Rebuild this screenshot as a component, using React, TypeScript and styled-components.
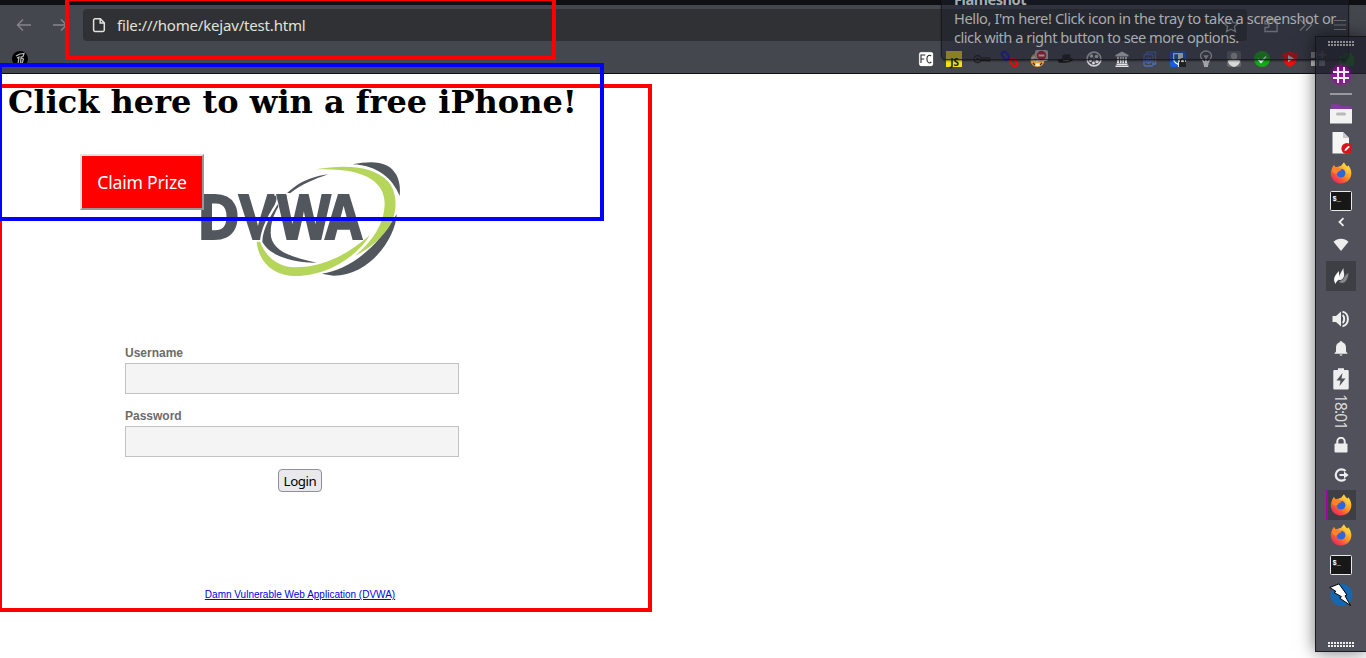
import React from "react";
import styled, { createGlobalStyle } from "styled-components";

const Global = createGlobalStyle`
  * { box-sizing: border-box; }
  body { margin: 0; background: #fff; overflow: hidden; }
  svg { display: block; flex: none; }
`;

const Desktop = styled.div`
  position: relative;
  width: 1366px;
  height: 658px;
  overflow: hidden;
  display: flex;
  flex-direction: column;
  background: #fff;
  font-family: "Noto Sans", sans-serif;
`;

const TabStrip = styled.div`
  height: 5px;
  flex: none;
  background: #0f1014;
`;

const NavBar = styled.div`
  height: 40px;
  flex: none;
  display: flex;
  align-items: center;
  background: #44474e;
  color: #e2e2da;
`;

const NavButtons = styled.div`
  width: 83px;
  display: flex;
  gap: 20px;
  padding-left: 16px;
  color: #85878b;
`;

const UrlBar = styled.div`
  width: 1164px;
  height: 32px;
  display: flex;
  align-items: center;
  padding: 0 8px 0 9px;
  border-radius: 4px;
  background: #303135;
`;

const Url = styled.span`
  flex: 1;
  margin-left: 11px;
  font-size: 15px;
  letter-spacing: -0.18px;
  line-height: 24px;
`;

const NavTools = styled.div`
  display: flex;
  align-items: center;
  gap: 19px;
  padding-left: 16px;
  color: #b5b6b8;
`;

const BookmarkBar = styled.div`
  height: 29px;
  flex: none;
  display: flex;
  align-items: center;
  justify-content: space-between;
  padding: 0 12px;
  background: #44474e;
  border-bottom: 1px solid #0f1014;
`;

const Extensions = styled.div`
  display: flex;
  gap: 12px;
`;

const Page = styled.main`
  position: relative;
  flex: 1;
  display: flex;
  flex-direction: column;
  background: #fff;
`;

const Heading = styled.h1`
  margin: 9px 0 0 8px;
  font: bold 32px/38px "DejaVu Serif", serif;
  color: #000;
`;

const ClaimButton = styled.button`
  position: absolute;
  left: 80px;
  top: 80px;
  width: 124px;
  height: 56px;
  padding: 0;
  border: 2px solid;
  border-color: #e3e3e3 #979797 #979797 #e3e3e3;
  background: #f00;
  color: #fff;
  font: 17.6px "Noto Sans", sans-serif;
  letter-spacing: -0.2px;
`;

const LoginFrame = styled.section`
  width: 600px;
  display: flex;
  flex-direction: column;
  align-items: center;
  padding-top: 39px;
  font-family: "Liberation Sans", Arial, sans-serif;
`;

const Brand = styled.div`
  width: 220px;
  height: 120px;
`;

const Form = styled.form`
  width: 350px;
  display: flex;
  flex-direction: column;
  margin-top: 64px;
`;

const Field = styled.label`
  display: flex;
  flex-direction: column;
  height: 63px;
  font-size: 12px;
  font-weight: bold;
  line-height: 18px;
  color: #6b6b6b;
`;

const Input = styled.input`
  width: 334px;
  height: 31px;
  margin-top: 1px;
  border: 1px solid #c2c2c2;
  background: #f4f4f4;
`;

const LoginButton = styled.button`
  align-self: center;
  width: 44px;
  height: 23px;
  margin-top: -1px;
  padding: 0;
  border: 1px solid #8f8f9d;
  border-radius: 4px;
  background: #e9e9ed;
  color: #000;
  font: 13.3px/20px "Noto Sans", sans-serif;
  letter-spacing: -0.4px;
`;

const FooterLink = styled.a`
  margin-top: 96px;
  font-size: 10px;
  line-height: 13px;
  color: #0000ee;
  text-decoration: underline;
`;

const Outline = styled.div<{ $c: string; $x: number; $y: number; $w: number; $h: number }>`
  position: absolute;
  left: ${(p) => p.$x}px;
  top: ${(p) => p.$y}px;
  width: ${(p) => p.$w}px;
  height: ${(p) => p.$h}px;
  border: 4px solid ${(p) => p.$c};
  pointer-events: none;
`;

const Notification = styled.aside`
  position: absolute;
  left: 941px;
  top: -14px;
  width: 408px;
  height: 74px;
  padding: 3px 12px;
  border: 1px solid rgba(20, 21, 26, 0.75);
  border-radius: 5px;
  background: rgba(28, 31, 44, 0.5);
  box-shadow: 0 1px 2px rgba(0, 0, 0, 0.5);
  color: #a9abad;
  font-size: 14.67px;
  line-height: 19px;
  white-space: nowrap;
`;

const NoticeLine = styled.div<{ $track: number; $bold?: boolean }>`
  letter-spacing: ${(p) => p.$track}px;
  font-weight: ${(p) => (p.$bold ? 700 : 400)};
`;

const Dock = styled.nav`
  position: absolute;
  left: 1315px;
  top: 36px;
  width: 51px;
  height: 616px;
  display: flex;
  flex-direction: column;
  border: 1px solid rgba(18, 19, 24, 0.85);
  border-right: 0;
  background: rgba(31, 32, 43, 0.78);
  box-shadow: 0 0 16px rgba(0, 0, 0, 0.55);
  clip-path: inset(-40px 0 -40px -40px);
`;

const Slot = styled.div<{ $h?: number; $gap?: number }>`
  height: ${(p) => p.$h ?? 30}px;
  margin-top: ${(p) => p.$gap ?? 0}px;
  flex: none;
  display: flex;
  align-items: center;
  justify-content: center;
`;

const ActiveTile = styled.div<{ $marked?: boolean }>`
  width: 30px;
  height: 30px;
  display: flex;
  align-items: center;
  justify-content: center;
  background: #3e3f45;
  box-shadow: ${(p) => (p.$marked ? "inset 2px 0 #a800a8" : "none")};
`;

const Clock = styled.span`
  writing-mode: vertical-rl;
  color: #dcdcdc;
  font-size: 15.5px;
  letter-spacing: -0.9px;
  line-height: 18px;
`;

const Divider = styled.div`
  width: 22px;
  height: 2px;
  background: #9a9a9e;
`;

const Grip = ({ color }: { color: string }) => (
  <svg width="27" height="5" fill={color}>
    {Array.from({ length: 9 }, (_, i) => (
      <g key={i}>
        <rect x={i * 3} y="0" width="2" height="2" />
        <rect x={i * 3} y="3" width="2" height="2" />
      </g>
    ))}
  </svg>
);

const Arrow = ({ flip }: { flip?: boolean }) => (
  <svg width="16" height="16" viewBox="0 0 16 16" fill="none" stroke="currentColor" strokeWidth="1.4">
    <path d={flip ? "M1 8h13M9 2.5 14.5 8 9 13.5" : "M15 8H2M7 2.5 1.5 8 7 13.5"} />
  </svg>
);

const FileIcon = () => (
  <svg width="14" height="16" viewBox="0 0 14 16" fill="none" stroke="#e2e2da" strokeWidth="1.5">
    <path d="M3 1.8h5.3l4 4V13a1.4 1.4 0 0 1-1.4 1.4H3A1.4 1.4 0 0 1 1.6 13V3.2A1.4 1.4 0 0 1 3 1.8ZM8.2 2v4h4" />
  </svg>
);

const StarIcon = () => (
  <svg width="16" height="16" viewBox="0 0 16 16" fill="none" stroke="#b5b6b8" strokeWidth="1.3">
    <path d="m8 1 2.1 4.6 5 .6-3.7 3.4 1 5L8 12.2l-4.4 2.4 1-5L.9 6.2l5-.6Z" />
  </svg>
);

const PuzzleIcon = () => (
  <svg width="16" height="16" viewBox="0 0 16 16" fill="none" stroke="currentColor" strokeWidth="1.4">
    <path d="M2 14.5v-4h2.2a1.8 1.8 0 0 0 0-3.6H2V4h4.5V2.8a1.8 1.8 0 0 1 3.6 0V4h4v10.5Z" />
  </svg>
);

const ChevronsIcon = () => (
  <svg width="16" height="16" viewBox="0 0 16 16" fill="none" stroke="currentColor" strokeWidth="1.4">
    <path d="m2 2.5 5.5 5.5L2 13.5M8 2.5 13.5 8 8 13.5" />
  </svg>
);

const MenuIcon = () => (
  <svg width="14" height="12" viewBox="0 0 14 12" stroke="currentColor" strokeWidth="1.2">
    <path d="M1 1.5h12M1 6h12M1 10.5h12" />
  </svg>
);

const Favicon = () => (
  <svg width="16" height="16" viewBox="0 0 16 16">
    <circle cx="8" cy="8" r="8" fill="#000" />
    <path d="m4 5 4-2 4-.5-1 3-2 .5-.5 7M5 7l2-1-1 7M9.5 7l2 1-1.5 4" fill="none" stroke="#b9b9b9" strokeWidth="1.2" />
  </svg>
);

const extensionArt: React.ReactNode[] = [
  <g>
    <rect x=".7" y=".7" width="14.8" height="14.8" rx="2.4" fill="#fff" stroke="#292929" strokeWidth=".6" />
    <path d="M3 12V4h4.3M3 8h3.2M13.2 5c-1.5-1.6-4.3-.6-4.3 3s2.4 5 4.4 3" fill="none" stroke="#292929" strokeWidth="1.1" />
  </g>,
  <g>
    <rect width="16" height="16" fill="#f7df1e" />
    <text x="4.3" y="14.6" fontFamily="Open Sans" fontSize="10" fontWeight="700" fill="#222">JS</text>
  </g>,
  <g fill="none" stroke="#202126" strokeWidth="1.3">
    <circle cx="3.6" cy="8" r="3.5" />
    <circle cx="3.6" cy="8" r=".8" />
    <path d="M7 6.8h8.5v3h-2l-1-1.2-1 1.2-1-1.2-1 1H7" />
  </g>,
  <g fill="none" strokeWidth="2">
    <rect x="-1" y="2.3" width="8.5" height="5" rx="2.5" transform="rotate(52 3.5 4.8)" stroke="#1b1bbb" />
    <rect x="7.5" y="8.5" width="8.5" height="5" rx="2.5" transform="rotate(52 11.5 11)" stroke="#f00" />
  </g>,
  <g>
    <circle cx="7.5" cy="9" r="7" fill="#e9a33a" />
    <path d="M1 7c3-3 7-3 12 0l-4 3c-3 1-6 0-8-3M4 13c3-1 5-1 8 0l-3 2H6Z" fill="#f2e9df" />
    <path d="m4 8 2.5 1.5M10 9.5l2.5-.5M3 12l2 2M12 12l-2 2" stroke="#40291a" strokeWidth="1.3" />
    <rect x="5" y="-1" width="13" height="11" rx="2" fill="#c5c6cb" />
    <circle cx="11.5" cy="4.5" r="4.7" fill="#d51d35" />
    <path d="M8.6 4.5h5.8" stroke="#fff" strokeWidth="2" />
  </g>,
  <g fill="#1c1d20">
    <ellipse cx="7.5" cy="9.3" rx="7.7" ry="2.6" transform="rotate(-8 7.5 9.3)" />
    <path d="M4 4.5c2-1 6-1.5 8.5-.8L12 9c-2 1.5-6 1.5-7 0Z" />
    <path d="M5 9c2 1 5 1 7-.5" fill="none" stroke="#777" strokeWidth=".8" />
  </g>,
  <g>
    <circle cx="8" cy="8" r="6.9" fill="none" stroke="#cfd0d3" strokeWidth="1.6" />
    <g fill="#e0e1e3">
      <circle cx="5.5" cy="5" r="1.8" /><circle cx="10.5" cy="5.5" r="1.8" /><circle cx="4.5" cy="9.5" r="1.5" />
      <circle cx="11" cy="10.5" r="1.7" /><circle cx="7.5" cy="12" r="1.4" /><circle cx="8" cy="8.5" r="1" />
    </g>
  </g>,
  <g fill="#e4e5e7">
    <path d="M8 .5 14.5 4v1.5h-13V4ZM2.500 12.500h11V14h-11ZM1.500 14.500h13V16h-13Z" />
    <path d="M3 6h2v6H3ZM5.900 6h1.700v6H5.900ZM8.400 6h1.700v6H8.400ZM11 6h2v6h-2Z" />
  </g>,
  <g fill="none" stroke="#4c70b8" strokeWidth="1.3">
    <rect x="2" y="3.5" width="9" height="11.5" rx="1.5" />
    <path d="M4.5 3V1.2h9V13H11" />
    <circle cx="6.5" cy="9.5" r="2.6" /><circle cx="6.5" cy="9.5" r=".7" />
  </g>,
  <g>
    <rect width="16" height="16" rx="2" fill="#175ddc" />
    <path d="M3 2h10v6c0 3-3 5-5 6-2-1-5-3-5-6Z" fill="#fff" />
    <path d="M4.3 3.2H8v9.4C6 11.5 4.3 10 4.3 8Z" fill="#175ddc" />
    <path d="M8 8h8v8H8Z" fill="#e8e8e8" />
    <rect x="9" y="11" width="7" height="5" fill="#222" />
    <path d="M10.5 11V9.7a2 2 0 0 1 4 0V11" fill="none" stroke="#222" strokeWidth="1.3" />
  </g>,
  <g fill="none" stroke="#c4c5c8" strokeWidth="1.4">
    <path d="M5.5 11C5.5 9 2.5 8 2.5 5a5.5 5 0 0 1 11 0c0 3-3 4-3 6Z" />
    <path d="M8 11V7l-1.500-2h3L8 7M5.500 13h5M6 15h4" />
  </g>,
  <g>
    <rect x="1" width="14" height="16" rx="2" fill="#66686e" />
    <circle cx="8" cy="5" r="3.2" fill="#b2b3b5" />
    <path d="M2 11c0-3 3-3 6-3s6 0 6 3c-1 3-4 4.500-6 5-2-.5-5-2-6-5Z" fill="#d8d8d8" />
  </g>,
  <g>
    <circle cx="8" cy="8" r="8" fill="#17a81a" />
    <path d="m4 8.2 3 3L12 5.5" fill="none" stroke="#fff" strokeWidth="1.7" />
  </g>,
  <g>
    <path d="M8 0c2 1.500 5 2 7.500 2C16 9 13 14 8 16 3 14 0 9 .5 2 3 2 6 1.500 8 0Z" fill="#f20d0d" />
    <path d="m6 4 6 3.500L6 11Z" fill="#ddd" />
  </g>,
  <path d="M1 1h6v6H1ZM1 9h6v6H1ZM9 9h6v6H9ZM11.300 0v2.800H8.500v1.800h2.800v2.800h1.800V4.600h2.900V2.800h-2.900V0Z" fill="#c6c6c6" />,
  <g fill="#18a51a">
    <path d="M1 5h4V2h8l3 4v9H1Z" />
    <path d="M4 7h4v5H4Z" fill="#0b5c10" />
  </g>,
];

const Firefox = () => (
  <svg width="22" height="22" viewBox="0 0 22 22">
    <defs>
      <linearGradient id="fox" x1=".85" y1=".1" x2=".2" y2=".95">
        <stop offset="0" stopColor="#ffe14a" />
        <stop offset=".45" stopColor="#ff9a27" />
        <stop offset=".75" stopColor="#f9503c" />
        <stop offset="1" stopColor="#e12a62" />
      </linearGradient>
    </defs>
    <path d="M2.500 5.500 4 3l1.500 2.200L8 4.700 10.500 4l1-.5L14 .2c.5 2.300 2 3 3.500 4.300l.8-1.200C22.500 8.500 22 14 19 17.700c-3.500 4.200-10 5-14.200 2C.5 16.600-.5 10.500 2.500 5.500Z" fill="url(#fox)" />
    <circle cx="11" cy="11.200" r="4.400" fill="#2c66dc" />
    <path d="M2 6.500 3.500 3.300 5 5.200 8.500 5l1.200 1.800 2.100.6c-.6 1.500-2.800 1.200-3.600 2.400-.5 1-.5 1.600-2 1.900C3.500 11.500 1.500 9.500 2 6.500Z" fill="#ff8423" />
    <path d="M11.500 3.800c3.500 1 6 4 5.200 8 2.300-2 1.800-5.500-.2-7.500L14 .8Z" fill="#ffcc38" />
  </svg>
);

const Terminal = () => (
  <svg width="22" height="20" viewBox="0 0 22 20">
    <rect x=".5" y=".5" width="21" height="19" rx="1" fill="#171717" stroke="#e9e9e9" />
    <text x="2.500" y="9.500" fontFamily="Liberation Mono" fontSize="7" fontWeight="700" fill="#fff">$_</text>
  </svg>
);

const HashIcon = () => (
  <svg width="30" height="26" viewBox="-7 -5 30 26" style={{ filter: "drop-shadow(0 0 2px #b800b8)" }}>
    <circle cx="8" cy="8" r="10" fill="#a000a8" opacity=".35" />
    <path d="M5 0v16M11 0v16M0 5h16M0 11h16" stroke="#f5f0f5" strokeWidth="2" />
  </svg>
);

const FolderIcon = () => (
  <svg width="22" height="20" viewBox="0 0 22 20">
    <path d="M1 6V1.500C1 .7 1.500.2 2.300.2H9l2 2h9.500c.6 0 1 .4 1 1V6Z" fill="#7f3ba5" />
    <path d="M0 5h22v14.500H0Z" fill="#f2f2f2" />
    <rect x="6" y="8.500" width="10" height="3" rx="1.500" fill="#b9b9b9" />
  </svg>
);

const DocIcon = () => (
  <svg width="22" height="24" viewBox="0 0 22 24">
    <path d="M2.500 1H13l6 6v15.500H2.500Z" fill="#f6f6f4" />
    <path d="M13 1v6h6Z" fill="#c9c9c9" />
    <circle cx="17" cy="17.500" r="5.600" fill="#d9151b" />
    <path d="m14.500 20 .5-2 3.500-3.300 1.300 1.300-3.500 3.400Z" fill="#fff" />
  </svg>
);

const ChevronLeft = () => (
  <svg width="8" height="10" viewBox="0 0 8 10" fill="none" stroke="#eee" strokeWidth="1.8">
    <path d="M6.500 1.200 2.500 5l4 3.800" />
  </svg>
);

const WifiIcon = () => (
  <svg width="16" height="14" viewBox="0 0 16 14"><path d="M.5 3.800C4.500-.4 11.500-.4 15.500 3.800L8 13Z" fill="#eee" /></svg>
);

const FlameIcon = () => (
  <svg width="16" height="18" viewBox="0 0 16 18">
    <path d="M9 16c4 0 6-5 6.500-10-3 2-4 3-5 6l-5 3Z" fill="#85868a" />
    <path d="M5.500 13c0-4 2-7 5-12-.5 4 2.500 7-1 11-1 1-2.500 1-4 1Z" fill="#eee" />
    <path d="M2.500 17c-3-5-1-8 3.500-13-.3 4 1.500 6-.5 9-1.500 1-2.500 2-3 4Z" fill="#fff" />
  </svg>
);

const SpeakerIcon = () => (
  <svg width="18" height="18" viewBox="0 0 18 18">
    <path d="M.5 6H4l5-4.500v15L4 12H.5Z" fill="#eee" />
    <path d="M10.500 5.200c2.200 1 2.200 6.600 0 7.600M10.500 1.800c7.200 1 7.200 13.400 0 14.400" fill="none" stroke="#eee" strokeWidth="2" />
  </svg>
);

const BellIcon = () => (
  <svg width="14" height="15" viewBox="0 0 14 15">
    <path d="M5.800.3h2.400v1C11 2 12 4 12 7v3.500l1.800 2.200H.2L2 10.500V7c0-3 1-5 3.800-5.700ZM5.200 13.500h3.600L7 15Z" fill="#eee" />
  </svg>
);

const BatteryIcon = () => (
  <svg width="16" height="22" viewBox="0 0 16 22">
    <path d="M5 .3h6V2h3.500c.7 0 1.200.5 1.200 1.200v17c0 .8-.5 1.300-1.200 1.300h-13C.8 21.500.3 21 .3 20.200v-17C.3 2.500.8 2 1.500 2H5Z" fill="#eee" />
    <path d="M9.500 5 3.500 12.500h4L6.500 18l6-7.500h-4Z" fill="#505159" />
  </svg>
);

const LockIcon = () => (
  <svg width="14" height="16" viewBox="0 0 14 16">
    <rect x=".5" y="6.500" width="13" height="9" rx="1" fill="#eee" />
    <path d="M3.300 7V4.500a3.700 3.700 0 0 1 7.400 0V7" fill="none" stroke="#eee" strokeWidth="2" />
  </svg>
);

const LogoutIcon = () => (
  <svg width="15" height="14" viewBox="0 0 15 14">
    <path d="M11.500 3a5.700 5.700 0 1 0 0 8" fill="none" stroke="#eee" strokeWidth="2.200" />
    <path d="M5.500 6H10V3.500L14.700 7 10 10.500V8H5.500Z" fill="#eee" />
  </svg>
);

const ZapIcon = () => (
  <svg width="24" height="24" viewBox="0 0 24 24">
    <circle cx="12.500" cy="12" r="11" fill="#1467b2" />
    <path d="M.8 4.500 10 .8 18 12l-2 .8 5.500 9.700-11-7.500 2-1.300L5 9.500l2-1Z" fill="#fff" stroke="#000" strokeWidth="1" />
  </svg>
);

const DvwaLogo = () => (
  <svg width="220" height="120" viewBox="0 30 660 360" role="img" aria-label="DVWA">
    <g fill="#52575e" fontFamily="Open Sans" fontWeight="700" fontSize="181">
      <g stroke="#52575e" strokeWidth="6">
        <text x="21" y="268" textLength="129" lengthAdjust="spacingAndGlyphs">D</text>
        <text x="147" y="268" textLength="114" lengthAdjust="spacingAndGlyphs">V</text>
      </g>
      <path d="M415 73C340 82 292 120 262 165C232 212 218 245 217 275C235 312 300 340 380 338C300 322 242 300 242 248C242 200 268 155 302 128C335 104 370 88 415 73Z" stroke="#fff" strokeWidth="14" paintOrder="stroke" />
      <path d="M253 133H296L303 160M262 137L292 274" fill="none" stroke="#fff" strokeWidth="8" />
      <text x="262" y="268" textLength="160" lengthAdjust="spacingAndGlyphs" stroke="#52575e" strokeWidth="6">W</text>
      <text x="406" y="268" textLength="110" lengthAdjust="spacingAndGlyphs" stroke="#52575e" strokeWidth="6">A</text>
      <path d="M487 43C550 30 598 34 620 76C630 98 631 118 629 138C608 86 564 46 487 43Z" />
      <path d="M620 192C618 262 540 378 430 377L395 371C476 360 560 296 620 192Z" />
    </g>
    <g fill="#b5d55b">
      <path d="M378 58C470 42 550 50 592 92C622 124 624 180 602 222C580 262 538 296 495 318C550 270 584 220 584 158C582 98 530 52 378 58Z" />
      <path d="M200 275C206 340 254 378 316 378C420 378 506 312 540 255C480 308 404 352 314 352C258 350 226 316 210 275Z" />
    </g>
  </svg>
);

export default function App() {
  return (
    <Desktop>
      <Global />
      <TabStrip />
      <NavBar>
        <NavButtons>
          <Arrow />
          <Arrow flip />
        </NavButtons>
        <UrlBar>
          <FileIcon />
          <Url>file:///home/kejav/test.html</Url>
          <StarIcon />
        </UrlBar>
        <NavTools>
          <PuzzleIcon />
          <ChevronsIcon />
          <MenuIcon />
        </NavTools>
      </NavBar>
      <BookmarkBar>
        <Favicon />
        <Extensions>
          {extensionArt.map((art, i) => (
            <svg key={i} width="16" height="16" viewBox="0 0 16 16" overflow="visible">
              {art}
            </svg>
          ))}
        </Extensions>
      </BookmarkBar>
      <Page>
        <Heading>Click here to win a free iPhone!</Heading>
        <LoginFrame>
          <Brand>
            <DvwaLogo />
          </Brand>
          <Form>
            <Field>
              Username
              <Input type="text" />
            </Field>
            <Field>
              Password
              <Input type="password" />
            </Field>
            <LoginButton type="button">Login</LoginButton>
          </Form>
          <FooterLink>Damn Vulnerable Web Application (DVWA)</FooterLink>
        </LoginFrame>
        <ClaimButton>Claim Prize</ClaimButton>
      </Page>

      <Notification>
        <NoticeLine $track={-0.5} $bold>Flameshot</NoticeLine>
        <NoticeLine $track={-0.4}>Hello, I'm here! Click icon in the tray to take a screenshot or</NoticeLine>
        <NoticeLine $track={-0.5}>click with a right button to see more options.</NoticeLine>
      </Notification>

      <Dock>
        <Slot $h={13}><Grip color="#8b8c90" /></Slot>
        <Slot $gap={10}><HashIcon /></Slot>
        <Slot $h={8}><Divider /></Slot>
        <Slot $gap={1} $h={29}><FolderIcon /></Slot>
        <Slot><DocIcon /></Slot>
        <Slot $h={29}><Firefox /></Slot>
        <Slot $h={27}><Terminal /></Slot>
        <Slot $h={16}><ChevronLeft /></Slot>
        <Slot><WifiIcon /></Slot>
        <Slot $gap={1}><ActiveTile><FlameIcon /></ActiveTile></Slot>
        <Slot $gap={13}><SpeakerIcon /></Slot>
        <Slot $h={29}><BellIcon /></Slot>
        <Slot $gap={1}><BatteryIcon /></Slot>
        <Slot $h={36}><Clock>18:01</Clock></Slot>
        <Slot><LockIcon /></Slot>
        <Slot><LogoutIcon /></Slot>
        <Slot><ActiveTile $marked><Firefox /></ActiveTile></Slot>
        <Slot><Firefox /></Slot>
        <Slot><Terminal /></Slot>
        <Slot><ZapIcon /></Slot>
        <Slot $h={13} $gap={28}><Grip color="#eee" /></Slot>
      </Dock>

      <Outline $c="#f00" $x={65} $y={-3} $w={491} $h={63} />
      <Outline $c="#f00" $x={-2} $y={84} $w={654} $h={528} />
      <Outline $c="#00f" $x={-2} $y={63} $w={606} $h={158} />
    </Desktop>
  );
}
